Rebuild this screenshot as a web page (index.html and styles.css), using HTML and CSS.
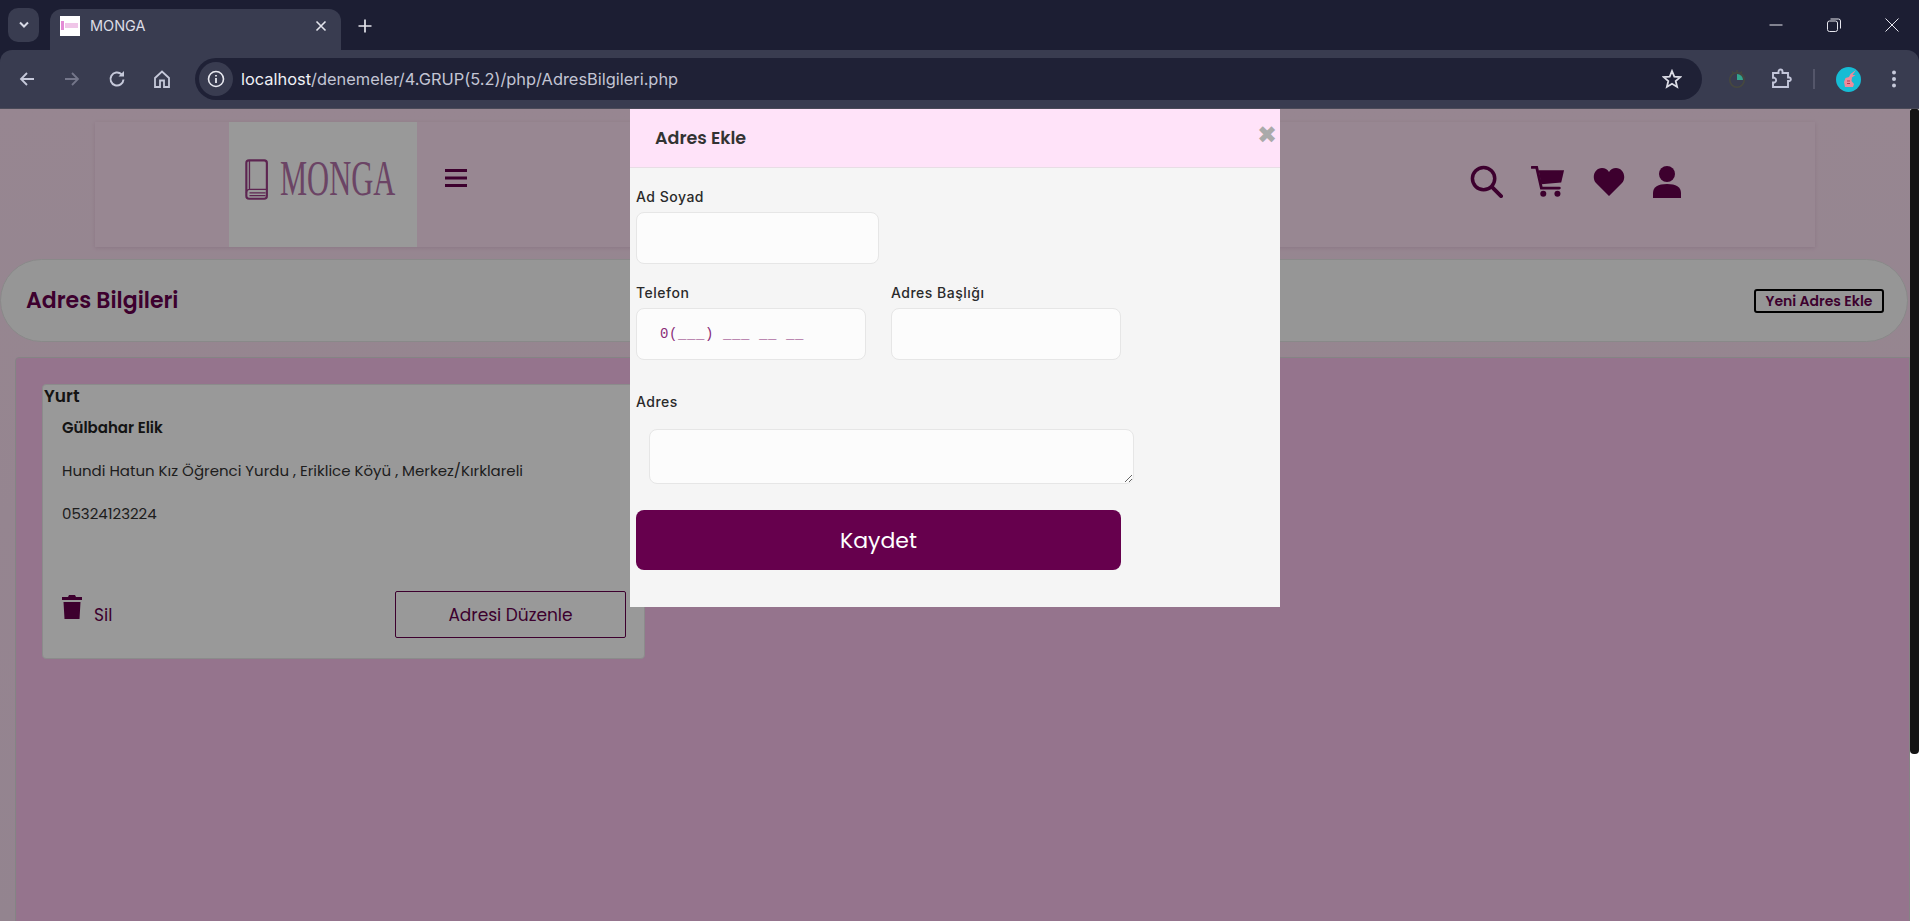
FILE: index.html
```html
<!DOCTYPE html>
<html>
<head lang="tr">
    <meta charset="UTF-8">
    <title>MONGA</title>
    <link rel="stylesheet" href="styles.css">
</head>
<body>
    <div class="tabstrip">
        <span class="tabsearch">
            <svg width="12" height="8" viewBox="0 0 12 8"><path d="M2 1.500 6 5.500 10 1.500" fill="none" stroke="#d8dae6" stroke-width="2"/></svg>
        </span>
        <div class="tab">
            <span class="favicon"><span class="favicon-book"></span><span class="favicon-mark"></span></span>
            <span class="tabtitle">MONGA</span>
            <svg class="tabclose" width="12" height="12" viewBox="0 0 12 12"><path d="M1.500 1.500 10.500 10.500M10.500 1.500 1.500 10.500" stroke="#e3e4ec" stroke-width="1.600"/></svg>
        </div>
        <svg class="newtab" width="14" height="14" viewBox="0 0 14 14"><path d="M7 0.500V13.500M0.500 7H13.500" stroke="#e3e4ec" stroke-width="1.700"/></svg>
        <div class="wincontrols">
            <svg width="14" height="14" viewBox="0 0 14 14"><path d="M0.500 7H13.500" stroke="#e6e6ee" stroke-width="1"/></svg>
            <svg width="14" height="14" viewBox="0 0 14 14"><rect x="0.500" y="3" width="10" height="10.500" rx="2" fill="none" stroke="#e6e6ee"/><path d="M3.500 1H11.500Q13.500 1 13.500 3V10.500" fill="none" stroke="#e6e6ee"/></svg>
            <svg width="14" height="14" viewBox="0 0 14 14"><path d="M0.500 0.500 13.500 13.500M13.500 0.500 0.500 13.500" stroke="#e6e6ee"/></svg>
        </div>
    </div>
    <div class="toolbar">
        <div class="navbtns">
            <svg width="18" height="18" viewBox="0 0 18 18"><path d="M16 9H3M9 3 3 9 9 15" fill="none" stroke="#c6c9da" stroke-width="1.800"/></svg>
            <svg width="18" height="18" viewBox="0 0 18 18"><path d="M2 9H15M9 3 15 9 9 15" fill="none" stroke="#74768a" stroke-width="1.800"/></svg>
            <svg width="18" height="18" viewBox="0 0 18 18"><path d="M15.500 9.500A6.500 6.500 0 1 1 13.500 4.300" fill="none" stroke="#c6c9da" stroke-width="2"/><path d="M10.500 6.500H16V1Z" fill="#c6c9da"/></svg>
            <svg width="18" height="18" viewBox="0 0 18 18"><path d="M2 8 9 1.500 16 8V17H11V10.500H7V17H2Z" fill="none" stroke="#c6c9da" stroke-width="1.800"/></svg>
        </div>
        <div class="omnibox">
            <span class="siteinfo">
                <svg width="18" height="18" viewBox="0 0 18 18"><circle cx="9" cy="9" r="7.500" fill="none" stroke="#e8e9f0" stroke-width="1.600"/><path d="M9 8V13M9 5V6.600" stroke="#e8e9f0" stroke-width="1.800"/></svg>
            </span>
            <span class="url"><span class="url-host">localhost</span>/denemeler/4.GRUP(5.2)/php/AdresBilgileri.php</span>
            <svg class="star" width="20" height="20" viewBox="0 0 20 20"><path d="M10 2 12.300 7.600 18.300 8.100 13.700 12 15.100 17.900 10 14.700 4.900 17.900 6.300 12 1.700 8.100 7.700 7.600Z" fill="none" stroke="#dcdde6" stroke-width="1.800"/></svg>
        </div>
        <div class="extbtns">
            <svg width="18" height="20" viewBox="0 0 18 20"><circle cx="9" cy="11" r="7.200" fill="none" stroke="#46483f" stroke-width="1.600"/><path d="M9 11V5A6 6 0 0 1 15 11Z" fill="#33a58c"/><path d="M4 2.500 5.500 4M14 2.500 12.500 4M9 1V3" stroke="#46483f" stroke-width="1.400"/></svg>
            <svg width="22" height="22" viewBox="0 0 22 22"><path d="M3 5H8.500V3.500A2 2 0 0 1 12.500 3.500V5H18V9.500H19.500A1.800 1.800 0 0 1 19.500 13H18V19H3V14.500H4.500A2.500 2.500 0 0 0 4.500 9.800H3Z" fill="none" stroke="#c3c6da" stroke-width="1.900"/></svg>
            <span class="tooldivider"></span>
            <span class="avatar">
                <svg width="16" height="20" viewBox="0 0 16 20"><path d="M15 1 9.500 5 8 8 4.500 9 3 13 4 18H12L13 15 10.500 12 11 8.500 14.500 6 11.500 6Z" fill="#ee8a9a"/><path d="M6 12H9M6 14.500H9" stroke="#b23a52" stroke-width="1"/></svg>
            </span>
            <svg class="kebab" width="6" height="20" viewBox="0 0 6 20"><circle cx="3" cy="3.500" r="2" fill="#c6c9da"/><circle cx="3" cy="10" r="2" fill="#c6c9da"/><circle cx="3" cy="16.500" r="2" fill="#c6c9da"/></svg>
        </div>
    </div>

    <div class="viewport">
        <div class="page">
            <header class="sitehead">
                <div class="logo">
                    <svg width="25" height="43" viewBox="0 0 28 46"><rect x="1.500" y="1.500" width="23" height="43" rx="3" fill="none" stroke="#9c3f88" stroke-width="2.400"/><path d="M5 1.500V34M1.500 38Q2 34 5 34H24.500M5 38H23M5 41H23" fill="none" stroke="#9c3f88" stroke-width="1.500"/></svg>
                    <span class="logotext">MONGA</span>
                </div>
                <svg class="burger" width="22" height="20" viewBox="0 0 22 20"><path d="M0 2.500H22M0 10H22M0 17.500H22" stroke="#66004d" stroke-width="3.200"/></svg>
                <nav class="headicons">
                    <svg width="33" height="33" viewBox="0 0 34 34"><circle cx="14" cy="14" r="11.500" fill="none" stroke="#66004d" stroke-width="3.600"/><path d="M22.500 22.500 32 32" stroke="#66004d" stroke-width="4" stroke-linecap="round"/></svg>
                    <svg width="34" height="33" viewBox="0 0 36 34"><path d="M1 2H6L11 24H30" fill="none" stroke="#66004d" stroke-width="3" stroke-linecap="round"/><path d="M8 5H35L32 18 11 20Z" fill="#66004d"/><circle cx="13" cy="30" r="3.200" fill="#66004d"/><circle cx="28" cy="30" r="3.200" fill="#66004d"/></svg>
                    <svg width="32" height="30" viewBox="0 0 32 30"><path d="M16 29 3 16C-2 10 2 1 9 1 12 1 14.500 2.500 16 5 17.500 2.500 20 1 23 1 30 1 34 10 29 16Z" fill="#66004d"/></svg>
                    <svg width="28" height="32" viewBox="0 0 28 32"><circle cx="14" cy="8" r="8" fill="#66004d"/><path d="M0 32V27C0 21 5 18 14 18 23 18 28 21 28 27V32Z" fill="#66004d"/></svg>
                </nav>
            </header>

            <div class="titlebar">
                <h1 class="pagetitle">Adres Bilgileri</h1>
                <button class="newaddress">Yeni Adres Ekle</button>
            </div>

            <main class="panel">
                <article class="addresscard">
                    <h2 class="cardlabel">Yurt</h2>
                    <div class="cardbody">
                        <p class="cardname">Gülbahar Elik</p>
                        <p class="cardline">Hundi Hatun Kız Öğrenci Yurdu , Eriklice Köyü , Merkez/Kırklareli</p>
                        <p class="cardline">05324123224</p>
                        <div class="cardactions">
                            <span class="deletelink">
                                <svg class="trash" width="20" height="24" viewBox="0 0 20 24"><path d="M7 0H13L14 2H20V5H0V2H6ZM1.500 7H18.500L17.500 24H2.500Z" fill="#66004d"/></svg>
                                <span class="deletetext">Sil</span>
                            </span>
                            <button class="editbtn">Adresi Düzenle</button>
                        </div>
                    </div>
                </article>
            </main>
        </div>
        <div class="scrollthumb"></div>

        <div class="overlay"></div>
        <div class="modal">
            <div class="modalhead">
                <span class="modaltitle">Adres Ekle</span>
                <span class="modalclose">✖</span>
            </div>
            <form class="modalform">
                <label class="field name-field">
                    <span class="fieldlabel">Ad Soyad</span>
                    <input class="textin name-in" type="text">
                </label>
                <div class="fieldrow">
                    <label class="field">
                        <span class="fieldlabel">Telefon</span>
                        <input class="textin phone-in" type="text" placeholder="0(___) ___ __ __">
                    </label>
                    <label class="field">
                        <span class="fieldlabel">Adres Başlığı</span>
                        <input class="textin" type="text">
                    </label>
                </div>
                <label class="field address-field">
                    <span class="fieldlabel">Adres</span>
                    <textarea class="textin address-in"></textarea>
                </label>
                <button class="savebtn" type="button">Kaydet</button>
            </form>
        </div>
    </div>
</body>
</html>
```

FILE: styles.css
```css
*{
    margin: 0;
    padding: 0;
    box-sizing: border-box;
}
html,body{
    height: 921px;
    overflow: hidden;
}
body{
    font-family: Poppins, "Lato", "Noto Sans", sans-serif;
    background: #1c1e33;
}
svg{
    display: block;
    flex: none;
}

/* browser chrome */
.tabstrip{
    height: 50px;
    background: #1c1e33;
    display: flex;
    align-items: flex-end;
    padding-left: 8px;
}
.tabsearch{
    width: 31px;
    height: 34px;
    margin-bottom: 8px;
    border-radius: 10px;
    background: #393c50;
    display: flex;
    align-items: center;
    justify-content: center;
}
.tab{
    width: 291px;
    height: 41px;
    margin-left: 11px;
    padding: 0 14px 8px 10px;
    background: #393c50;
    border-radius: 12px 12px 0 0;
    display: flex;
    align-items: center;
}
.favicon{
    width: 20px;
    height: 20px;
    background: #fff;
    display: flex;
    align-items: center;
    gap: 1px;
    padding-left: 1px;
}
.favicon-book{
    width: 3px;
    height: 9px;
    background: #e48ad6;
}
.favicon-mark{
    width: 13px;
    height: 5px;
    background: #f0c6e8;
}
.tabtitle{
    margin-left: 10px;
    flex: 1;
    font: 14.5px "Inter", "Liberation Sans", sans-serif;
    color: #dcdde6;
}
.newtab{
    margin: 0 0 17px 17px;
}
.wincontrols{
    margin-left: auto;
    margin-bottom: 18px;
    padding-right: 20px;
    display: flex;
    gap: 44px;
}
.toolbar{
    height: 59px;
    background: #393c50;
    border-radius: 12px 12px 0 0;
    border-bottom: 1px solid #4a4a58;
    display: flex;
    align-items: center;
}
.navbtns{
    width: 195px;
    padding-left: 18px;
    display: flex;
    gap: 27px;
}
.omnibox{
    width: 1507px;
    height: 42px;
    background: #1f2136;
    border-radius: 21px;
    display: flex;
    align-items: center;
    padding: 0 20px 0 4px;
}
.siteinfo{
    width: 34px;
    height: 34px;
    border-radius: 50%;
    background: #393c50;
    display: flex;
    align-items: center;
    justify-content: center;
}
.url{
    margin-left: 8px;
    flex: 1;
    font: 16.4px "Inter", "Liberation Sans", sans-serif;
    color: #c3c5d4;
}
.url-host{
    color: #f0f1f6;
}
.extbtns{
    flex: 1;
    display: flex;
    align-items: center;
    padding-left: 26px;
}
.extbtns svg:nth-child(2){
    margin-left: 24px;
}
.tooldivider{
    width: 2px;
    height: 20px;
    margin-left: 21px;
    background: #54566a;
}
.avatar{
    width: 25px;
    height: 25px;
    margin-left: 21px;
    border-radius: 50%;
    background: #16bcd4;
    display: flex;
    align-items: center;
    justify-content: center;
}
.kebab{
    margin-left: 30px;
}

/* page behind the dialog */
.viewport{
    position: relative;
    height: 812px;
    overflow: hidden;
    background: #fff;
}
.page{
    width: 1910px;
    height: 812px;
    background: linear-gradient(#fce0f2, #f6dcef);
    padding-top: 13px;
}
.sitehead{
    width: 1720px;
    height: 125px;
    margin-left: 95px;
    background: #fde2f4;
    box-shadow: 0 1px 4px rgba(120,60,110,0.15);
    display: flex;
    align-items: center;
}
.logo{
    width: 188px;
    height: 125px;
    margin-left: 134px;
    padding: 36px 0 0 16px;
    background: #fff;
    display: flex;
    align-items: flex-start;
}
.logotext{
    margin: -5px 0 0 10px;
    font: 50px/50px "Liberation Serif", serif;
    color: #b272a8;
    transform: scaleX(0.61);
    transform-origin: left top;
    display: block;
}
.burger{
    margin: 0 0 14px 28px;
}
.headicons{
    margin: 0 134px 6px auto;
    display: flex;
    align-items: center;
    gap: 28px;
}
.titlebar{
    width: 1908px;
    height: 83px;
    margin-top: 12px;
    padding: 0 23px 0 25px;
    background: #fbfbfb;
    border: 1px solid #e4e4e4;
    border-radius: 42px;
    display: flex;
    align-items: center;
    justify-content: space-between;
}
.pagetitle{
    font-size: 22px;
    font-weight: 600;
    color: #66004d;
}
.newaddress{
    width: 130px;
    height: 24px;
    font-family: inherit;
    font-size: 14px;
    font-weight: 600;
    color: #66004d;
    background: transparent;
    border: 2px solid #000;
    border-radius: 3px;
}
.panel{
    width: 1895px;
    height: 600px;
    margin: 15px 0 0 15px;
    padding: 26px 26px;
    background: #f9c1ec;
    border: 1px solid #ddd;
    border-radius: 4px 0 0 0;
}
.addresscard{
    width: 603px;
    height: 275px;
    background: #fff;
    border: 1px solid #e8e8e8;
    border-radius: 4px;
}
.cardlabel{
    padding-left: 1px;
    font-size: 17px;
    font-weight: 600;
    line-height: 22px;
    color: #222;
}
.cardbody{
    padding: 0 18px 0 19px;
}
.cardname{
    margin-top: 11px;
    font-size: 15px;
    font-weight: 600;
    line-height: 20px;
    color: #222;
}
.cardline{
    margin-top: 22px;
    font-size: 15px;
    line-height: 21px;
    color: #333;
}
.cardactions{
    margin-top: 67px;
    display: flex;
    justify-content: space-between;
    align-items: flex-start;
}
.deletelink{
    display: flex;
    align-items: flex-start;
    gap: 12px;
}
.trash{
    margin-top: 4px;
}
.deletetext{
    margin-top: 13px;
    font-size: 17px;
    line-height: 22px;
    color: #66004d;
}
.editbtn{
    width: 231px;
    height: 47px;
    font-family: inherit;
    font-size: 17px;
    color: #66004d;
    background: transparent;
    border: 1px solid #66004d;
    border-radius: 2px;
}
.scrollthumb{
    position: absolute;
    top: 0;
    right: 0;
    width: 9px;
    height: 645px;
    background: #141414;
    border-radius: 2px 2px 4px 4px;
}

/* dialog */
.overlay{
    position: absolute;
    inset: 0 9px 0 0;
    background: rgba(0,0,0,0.4);
}
.modal{
    position: absolute;
    top: 0;
    left: 630px;
    width: 650px;
    height: 498px;
    background: #f5f5f5;
}
.modalhead{
    height: 59px;
    padding-left: 25px;
    background: #ffe3f9;
    border-bottom: 1px solid #e8dde5;
    display: flex;
    align-items: center;
    justify-content: space-between;
}
.modaltitle{
    font-size: 17.500px;
    font-weight: 600;
    color: #333;
}
.modalclose{
    margin: -6px 3px 0 0;
    font: 700 24px/1 "DejaVu Sans", sans-serif;
    color: #aaa;
}
.modalform{
    padding: 19px 0 0 6px;
}
.field{
    display: flex;
    flex-direction: column;
}
.fieldlabel{
    height: 25px;
    font: 500 14px/20px "Inter", "Noto Sans", sans-serif;
    letter-spacing: 0.5px;
    color: #2a2a2a;
}
.textin{
    height: 52px;
    background: #fcfcfc;
    border: 1px solid #e6e6e6;
    border-radius: 8px;
    outline: none;
}
.name-in{
    width: 243px;
}
.fieldrow{
    margin-top: 19px;
    display: flex;
    gap: 25px;
}
.fieldrow .textin{
    width: 230px;
}
.phone-in{
    padding-left: 23px;
    font: 14px "Liberation Mono", monospace;
    letter-spacing: 0.6px;
}
.phone-in::placeholder{
    color: #8a2c78;
    opacity: 1;
}
.address-field{
    margin-top: 32px;
}
.address-in{
    width: 485px;
    height: 55px;
    margin: 12px 0 0 13px;
    display: block;
}
.savebtn{
    display: block;
    width: 485px;
    height: 60px;
    margin-top: 26px;
    font-family: inherit;
    font-size: 22px;
    color: #fff;
    background: #66004d;
    border: none;
    border-radius: 8px;
}
```
